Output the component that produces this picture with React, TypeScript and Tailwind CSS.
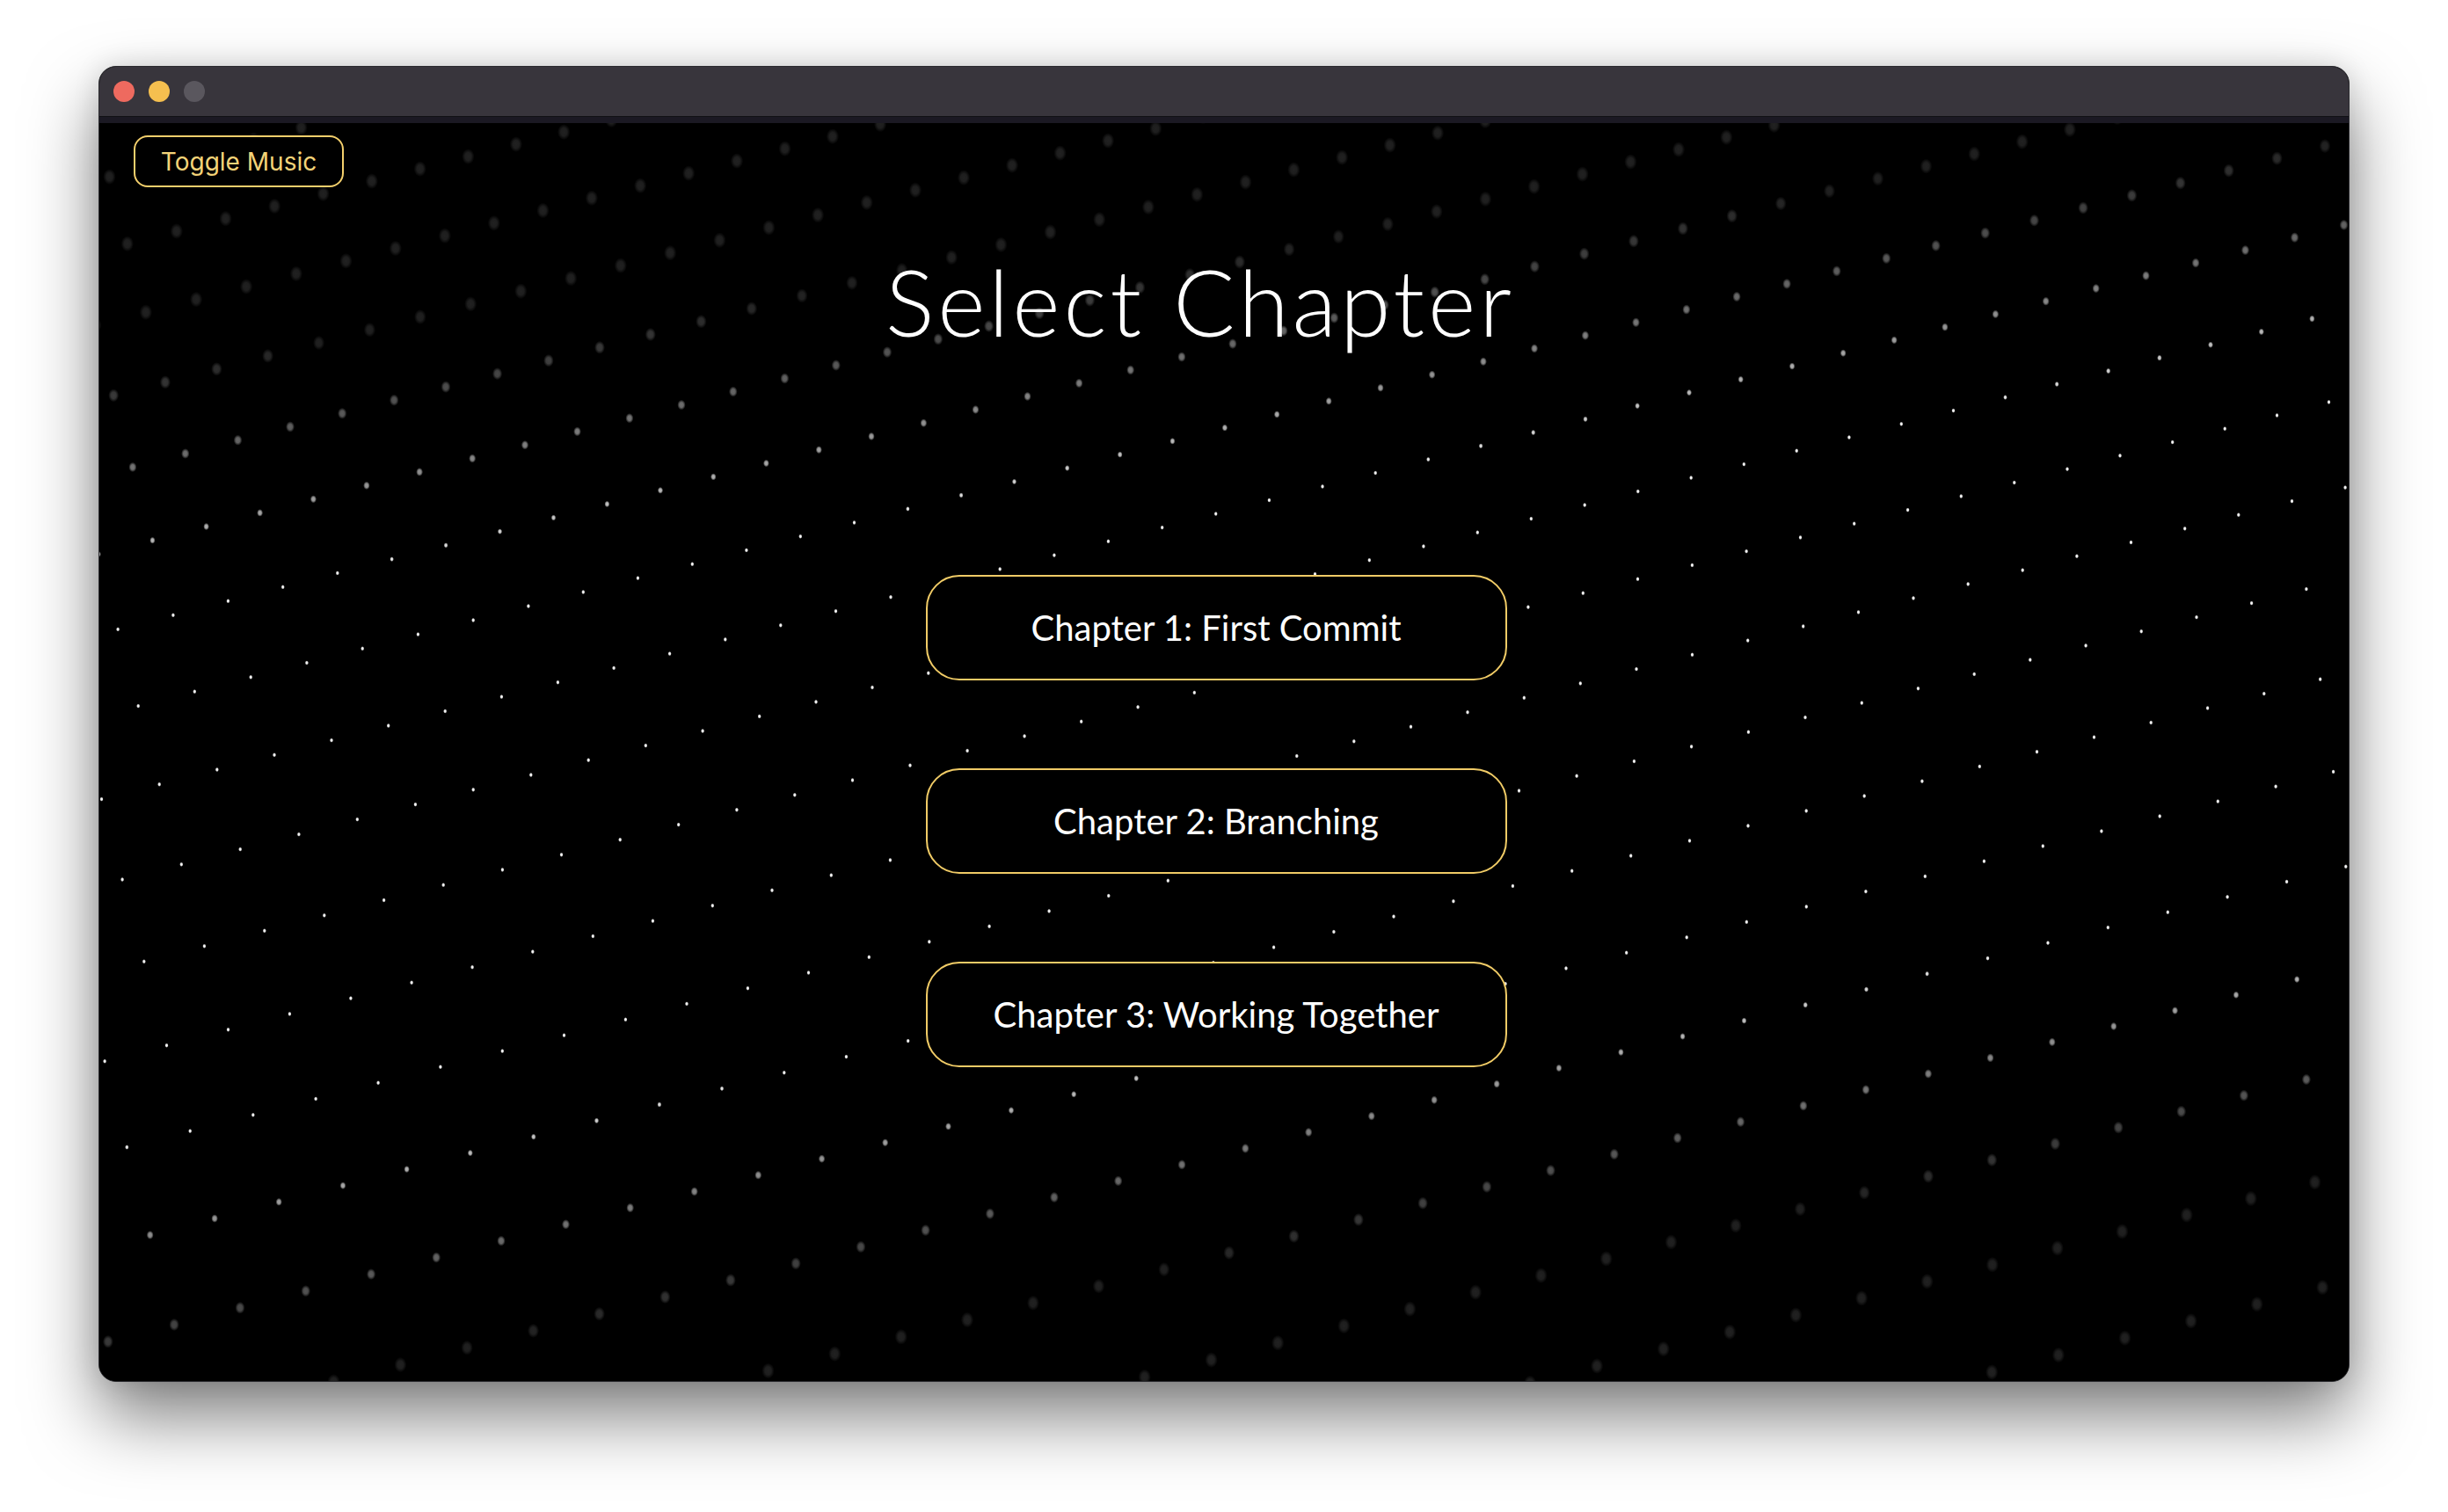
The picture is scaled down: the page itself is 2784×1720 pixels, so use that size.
import React from 'react';

// área de conteúdo da janela (px)
const W = 2558;
const H = 1431;

interface Dot {
  x: number;
  y: number;
  t: number; // 0 = em foco, 1 = fora de foco
}

const clamp = (v: number, a: number, b: number) => Math.min(b, Math.max(a, v));

// grade de pontos em perspectiva, com faixa central nítida
const buildDots = (): Dot[] => {
  const dots: Dot[] = [];
  const scale = (y: number) => (y + 3500) / 3700;
  let y = -760;
  let phase = 0;
  while (y < H + 900) {
    const sc = scale(y);
    let px = -90 + phase * 57 * sc;
    let py = y - phase * 14.6 * sc;
    while (px < W + 60) {
      if (px > -20 && px < W + 20 && py > -20 && py < H + 20) {
        const d = py - (850 - 0.1 * px);
        const t = clamp((Math.abs(d) - 310) / 300, 0, 1);
        dots.push({ x: px, y: py, t });
      }
      const k = scale(py);
      px += 57 * k;
      py -= 14.6 * k;
    }
    y += 84 * sc;
    phase = (phase + 0.32) % 1;
  }
  return dots;
};

const Starfield: React.FC = () => {
  const dots = React.useMemo(buildDots, []);
  return (
    <svg className="absolute inset-0 h-full w-full" viewBox={`0 0 ${W} ${H}`} preserveAspectRatio="none">
      <defs>
        <radialGradient id="soft">
          <stop offset="0" stopColor="#fff" stopOpacity="1" />
          <stop offset="0.5" stopColor="#fff" stopOpacity="0.9" />
          <stop offset="1" stopColor="#fff" stopOpacity="0" />
        </radialGradient>
      </defs>
      {dots.map((d, i) => {
        const r = 2.4 + 5.6 * d.t;
        const o = 1 - 0.87 * Math.min(1, Math.pow(d.t, 0.8) * 1.1);
        return (
          <ellipse
            key={i}
            cx={d.x.toFixed(1)}
            cy={d.y.toFixed(1)}
            rx={(r * 0.9).toFixed(2)}
            ry={(r * 1.12).toFixed(2)}
            fill="url(#soft)"
            opacity={o.toFixed(2)}
          />
        );
      })}
    </svg>
  );
};

const chapters = ['Chapter 1: First Commit', 'Chapter 2: Branching', 'Chapter 3: Working Together'];

const App: React.FC = () => {
  return (
    <div className="min-h-screen w-full bg-white pt-[75px] pl-[112px]">
      {/* janela */}
      <div className="flex h-[1497px] w-[2560px] flex-col overflow-hidden rounded-[20px] border border-[#2a2a2e] bg-black shadow-[0_40px_80px_rgba(0,0,0,0.5),0_0_30px_rgba(0,0,0,0.12)]">
        <div className="flex h-[56px] shrink-0 items-center gap-[16px] bg-[#38353c] pl-[16px]">
          <span className="h-[24px] w-[24px] rounded-full bg-[#ee6a5f]" />
          <span className="h-[24px] w-[24px] rounded-full bg-[#f5bf4f]" />
          <span className="h-[24px] w-[24px] rounded-full bg-[#5a575e]" />
        </div>
        <div className="h-[8px] shrink-0 border-t border-[#111114] bg-[#1b1923]" />

        {/* conteúdo */}
        <div className="relative flex-1 overflow-hidden bg-black">
          <Starfield />
          <div className="relative flex flex-col">
            <div className="pl-[39px] pt-[14px]">
              <button className="h-[59px] w-[239px] rounded-[16px] border-2 border-[#f3cf6c] bg-black font-['Inter','Liberation_Sans',sans-serif] text-[28px] text-[#f3d378]">
                Toggle Music
              </button>
            </div>

            <h1 className="mt-[78px] pr-[54px] text-center font-['Lato','Liberation_Sans',sans-serif] text-[104px] font-light leading-none tracking-[0.038em] text-white">
              Select Chapter
            </h1>

            <div className="mt-[259px] flex flex-col items-center gap-[100px] pr-[18px]">
              {chapters.map((c) => (
                <button
                  key={c}
                  className="flex h-[120px] w-[661px] items-center justify-center rounded-[38px] border-2 border-[#f0cb66] bg-black font-['Lato','Liberation_Sans',sans-serif] text-[40px] text-white"
                >
                  {c}
                </button>
              ))}
            </div>
          </div>
        </div>
      </div>
    </div>
  );
};

export default App;
